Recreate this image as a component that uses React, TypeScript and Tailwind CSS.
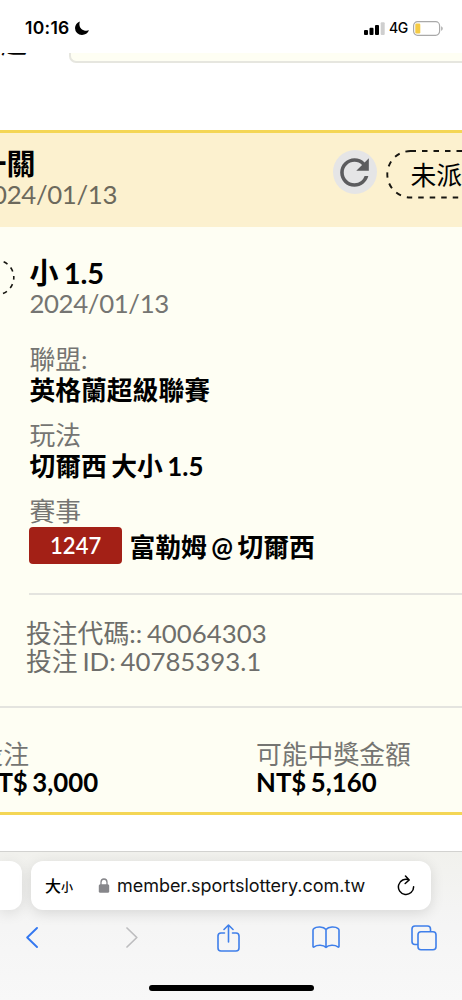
import type { ReactNode } from 'react';
import { MdRefresh } from 'react-icons/md';

function StatusBar() {
  return (
    <header className="flex h-[53px] shrink-0 items-start justify-between bg-white pl-[25px] pr-[19px] pt-[17px] font-['Inter','Liberation_Sans',sans-serif]">
      <div className="flex h-[22px] items-center gap-[5px]">
        <span className="text-[17.500px] font-semibold leading-[22px] tracking-[0.3px]">10:16</span>
        <svg width="14" height="14" viewBox="0 0 14 14">
          <path d="M5 .4C2 1.400 0 4 0 7a7 7 0 0 0 7 7c3.200 0 5.800-1.900 7-4.700-.8.3-1.700.5-2.600.5C7.500 9.800 4.400 7 4.400 3.200c0-1 .2-2 .6-2.800z" />
        </svg>
      </div>
      <div className="flex h-[22px] items-center">
        <svg width="21" height="13" viewBox="0 0 21 13" className="mr-[4px]">
          <rect x="0" y="8" width="4" height="5" rx="1" />
          <rect x="5.500" y="5.700" width="4" height="7.300" rx="1" />
          <rect x="11" y="3" width="4" height="10" rx="1" />
          <rect x="16.700" y="0.300" width="4" height="12.700" rx="1" fill="#cfcfcf" />
        </svg>
        <span className="mr-[5px] text-[14px] font-medium leading-[22px] tracking-[-0.3px]">4G</span>
        <svg width="30" height="15" viewBox="0 0 30 15">
          <rect x="0.600" y="0.700" width="26" height="13.600" rx="4" fill="none" stroke="#a9a9a9" strokeWidth="1.200" />
          <rect x="2.300" y="2.600" width="5" height="9.800" rx="1.200" fill="#f5cb45" />
          <path d="M28.200 5.200c1 .4 1.500 1.300 1.500 2.300s-.5 1.900-1.500 2.300z" fill="#a9a9a9" />
        </svg>
      </div>
    </header>
  );
}

function Field({ label, children }: { label: string; children: ReactNode }) {
  return (
    <div className="h-[76px]">
      <div className="leading-[31px] text-[#757572]">{label}</div>
      <div className="font-bold leading-[31px]">{children}</div>
    </div>
  );
}

function TicketHeader() {
  return (
    <div className="flex h-[94px] justify-between bg-[#fcf1cf]">
      <div className="-ml-[22.500px] pt-[14px]">
        <div className="text-[29px] font-bold leading-[33px]">一關</div>
        <div className="leading-[28px] tracking-[-0.35px] text-[#6c695c]">2024/01/13</div>
      </div>
      <div className="flex pt-[17px]">
        <button className="flex size-[44px] items-center justify-center rounded-full bg-[#e5e5e6] text-[#5c5c5e]">
          <MdRefresh className="size-[43px]" />
        </button>
        <div className="ml-[9px] w-[76.500px] overflow-hidden">
          <div className="relative h-[50px] w-[130px]">
            <svg width="130" height="50" className="absolute inset-0 fill-none stroke-[#171611]">
              <rect x="1.300" y="1" width="126" height="46.500" rx="23.200" strokeWidth="1.900" strokeDasharray="5.500 6" />
            </svg>
            <span className="relative block pl-[25px] leading-[50px]">未派彩</span>
          </div>
        </div>
      </div>
    </div>
  );
}

function Ticket() {
  return (
    <section className="h-[685px] shrink-0 overflow-hidden border-y-3 border-[#f4d655] bg-[#fefef3]">
      <TicketHeader />

      <div className="flex h-[368px]">
        <svg width="16" height="60" viewBox="0 0 16 60" className="mt-[20px] shrink-0 fill-none stroke-[#171611]">
          <circle cx="-3.500" cy="30.500" r="17.300" strokeWidth="1.600" strokeDasharray="4.500 4.560" strokeDashoffset="2.250" />
        </svg>
        <div className="ml-[13.400px] flex-1 border-b-2 border-[#e4e4df] pt-[30px]">
          <div className="text-[29px] font-bold leading-[31px]">小 1.5</div>
          <div className="mb-[26px] leading-[30px] tracking-[-0.35px] text-[#757572]">2024/01/13</div>
          <Field label="聯盟:">英格蘭超級聯賽</Field>
          <Field label="玩法">切爾西 大小 1.5</Field>
          <Field label="賽事">
            <div className="flex h-[37px] items-center gap-[7.500px]">
              <span className="h-[37px] w-[92.500px] rounded-[4px] bg-[#a32016] text-center text-[22px] font-semibold leading-[38px] text-white">
                1247
              </span>
              <span className="leading-[37px] pt-[3px]">富勒姆 @ 切爾西</span>
            </div>
          </Field>
        </div>
      </div>

      <div className="h-[113px] border-b-2 border-[#e4e4df] pl-[26px] pt-[24px] leading-[28px] text-[#6e6e6b]">
        <div>投注代碼:: 40064303</div>
        <div>投注 ID: 40785393.1</div>
      </div>

      <div className="flex pt-[32px] leading-[28px]">
        <div className="-ml-[22.500px] w-[278.500px]">
          <div className="text-[#757572]">投注</div>
          <div className="font-bold">NT$ 3,000</div>
        </div>
        <div>
          <div className="text-[#757572]">可能中獎金額</div>
          <div className="font-bold">NT$ 5,160</div>
        </div>
      </div>
    </section>
  );
}

function BrowserBar() {
  return (
    <footer className="flex h-[149px] shrink-0 flex-col border-t border-[#d2d2d0] bg-gradient-to-b from-[#f1f1ed] via-[#f5f5f5] to-[#f8f8f8] font-['Inter','Liberation_Sans',sans-serif] [word-spacing:0px]">
      <div className="flex h-[58px] shrink-0 pt-[9px]">
        <div className="h-[49px] w-[22px] rounded-r-[12px] bg-white shadow-[0_3px_14px_rgba(0,0,0,0.1)]" />
        <div className="ml-[9px] flex h-[49px] w-[400px] items-center rounded-[12px] bg-white pl-[14px] pr-[16px] shadow-[0_3px_14px_rgba(0,0,0,0.12)]">
          <span className="w-[53px] whitespace-nowrap font-['Noto_Sans_CJK_TC',sans-serif] text-[16px] font-medium leading-[20px]">
            大<span className="text-[12px]">小</span>
          </span>
          <svg width="12" height="15" viewBox="0 0 12 15" fill="#86868a">
            <rect x="0.800" y="6.300" width="10.400" height="8.500" rx="1.500" />
            <path d="M3 7V4.200C3 2.300 4.300 1 6 1s3 1.300 3 3.200V7" fill="none" stroke="#86868a" strokeWidth="1.300" />
          </svg>
          <span className="ml-[7px] whitespace-nowrap text-[18px] leading-[24px] tracking-[-0.04px] text-[#111]">
            member.sportslottery.com.tw
          </span>
          <svg width="18" height="21" viewBox="0 0 18 21" className="ml-auto fill-none stroke-black" strokeWidth="1.500" strokeLinecap="round" strokeLinejoin="round">
            <path d="M12 4.900A7.600 7.600 0 1 0 16.600 11.800M8.500 1l3.700 4-4 3.500" />
          </svg>
        </div>
      </div>

      <nav className="flex h-[55px] items-center pl-[26px]">
        <svg width="12" height="21" viewBox="0 0 12 21" className="fill-none stroke-[#3478f0]" strokeWidth="1.900" strokeLinecap="round" strokeLinejoin="round">
          <path d="M11 1L1.200 10.500 11 20" />
        </svg>
        <svg width="12" height="21" viewBox="0 0 12 21" className="ml-[88px] fill-none stroke-[#bdbdbf]" strokeWidth="1.700" strokeLinecap="round" strokeLinejoin="round">
          <path d="M1 1l9.800 9.500L1 20" />
        </svg>
        <svg width="24" height="28" viewBox="0 0 24 28" className="ml-[79px] fill-none stroke-[#3f7fea]" strokeWidth="1.600" strokeLinecap="round" strokeLinejoin="round">
          <path d="M7.500 9H4a3 3 0 0 0-3 3v12a3 3 0 0 0 3 3h15a3 3 0 0 0 3-3V12a3 3 0 0 0-3-3h-3.500M11.500 18V1.200M7 5.500l4.500-4.500L16 5.500" />
        </svg>
        <svg width="28" height="23" viewBox="0 0 28 23" className="ml-[71px] fill-none stroke-[#3f7fea]" strokeWidth="1.600" strokeLinecap="round" strokeLinejoin="round">
          <path d="M14 3.500C11.500.3 4.500.2 1.800 2.600c-.5.4-.8.9-.8 1.600v16.200c0 .6.6.9 1.100.5 3-2.300 9.400-2.300 11.900.6 2.500-2.900 8.900-2.900 11.900-.6.5.4 1.100.1 1.100-.5V4.200c0-.7-.3-1.200-.8-1.600C23.500.2 16.500.3 14 3.500zM14 3.500v18" />
        </svg>
        <svg width="26" height="26" viewBox="0 0 26 26" className="ml-[71px] fill-none stroke-[#3f7fea]" strokeWidth="1.600">
          <path d="M19.500 6.500V4A3 3 0 0 0 16.500 1H4a3 3 0 0 0-3 3v12.500a3 3 0 0 0 3 3h3" />
          <rect x="7" y="6.700" width="18" height="18" rx="3" />
        </svg>
      </nav>

      <div className="mx-auto mt-[20px] h-[6px] w-[165px] rounded-full bg-black" />
    </footer>
  );
}

export default function App() {
  return (
    <div className="flex h-[1000px] w-[462px] flex-col overflow-hidden bg-white font-['Lato','Noto_Sans_CJK_TC',sans-serif] text-[25.800px] text-black [word-spacing:-1.800px]">
      <StatusBar />

      {/* Tail of the filter row that scrolls under the status bar */}
      <div className="flex h-[77px] shrink-0 overflow-hidden">
        <div className="-mt-[25px] h-[32px] w-[68.500px] pl-[1px] leading-[31px]">起</div>
        <div className="h-[10px] flex-1 rounded-bl-[7px] border-b-2 border-l-2 border-[#e6e6df] bg-[#fefef3]" />
      </div>

      <Ticket />
      <div className="h-[36px] shrink-0" />
      <BrowserBar />
    </div>
  );
}
